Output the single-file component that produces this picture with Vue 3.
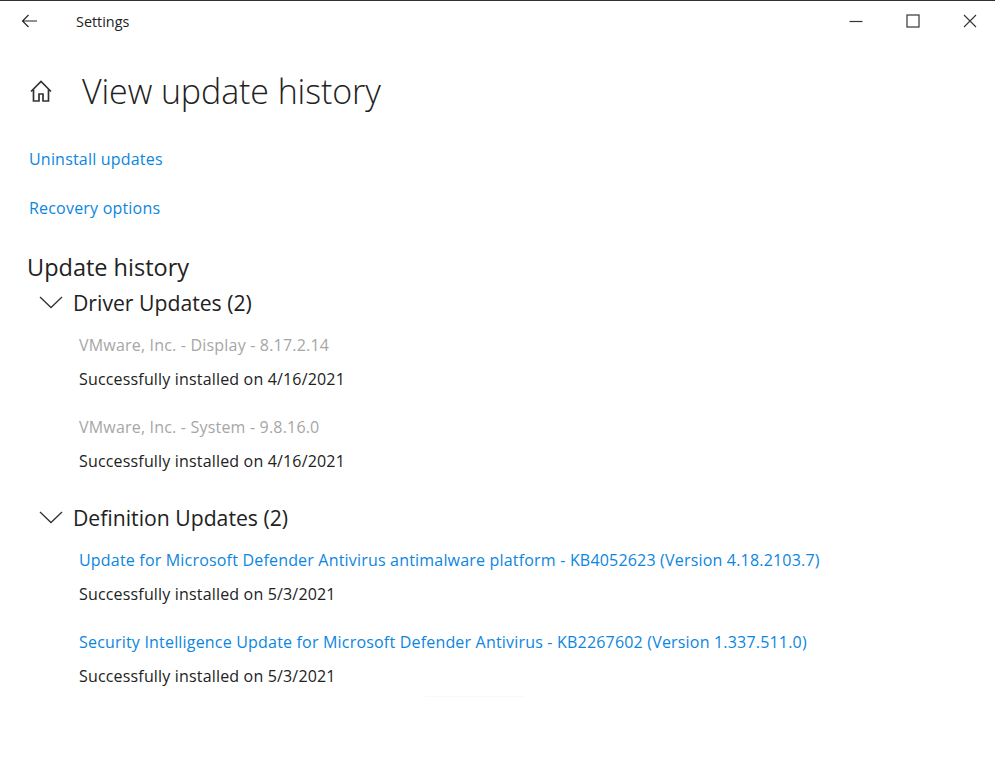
<template>
  <div class="window">
    <header class="titlebar">
      <div class="back">
        <svg width="16" height="14" viewBox="0 0 16 14"><path d="M7.5 1 1.5 7l6 6M1.5 7H16" fill="none" stroke="#222" stroke-width="1.1" /></svg>
      </div>
      <span class="app-name">Settings</span>
      <div class="controls">
        <svg width="14" height="14" viewBox="0 0 14 14"><path d="M0.5 7.5h13" stroke="#333" stroke-width="1.2" /></svg>
        <svg width="14" height="14" viewBox="0 0 14 14"><rect x="1" y="1" width="12" height="12" fill="none" stroke="#444" stroke-width="1.3" /></svg>
        <svg width="14" height="14" viewBox="0 0 14 14"><path d="M1 1l12 12M13 1 1 13" stroke="#333" stroke-width="1.1" /></svg>
      </div>
    </header>

    <main class="content">
      <div class="page-head">
        <svg class="home" width="24" height="24" viewBox="0 0 24 24">
          <path d="M2 12.5 12 2.500l10 10M4.500 10.500V22H10v-7h4v7h5.500V10.500" fill="none" stroke="#333" stroke-width="1.700" />
        </svg>
        <h1>View update history</h1>
      </div>

      <nav class="links">
        <a>Uninstall updates</a>
        <a>Recovery options</a>
      </nav>

      <h2>Update history</h2>

      <section v-for="group in groups" :key="group.title" class="group">
        <div class="group-head">
          <svg width="26" height="14" viewBox="0 0 26 14"><path d="M2 2 13 12.500 24 2" fill="none" stroke="#333" stroke-width="1.300" /></svg>
          <h3>{{ group.title }}</h3>
        </div>
        <div v-for="item in group.items" :key="item" class="entry">
          <div class="entry-name" :class="group.kind">{{ item }}</div>
          <div class="entry-status">{{ group.status }}</div>
        </div>
      </section>
      <div class="fade-line"></div>
    </main>
  </div>
</template>

<script setup>
const groups = [
  {
    title: "Driver Updates (2)",
    kind: "muted",
    status: "Successfully installed on 4/16/2021",
    items: ["VMware, Inc. - Display - 8.17.2.14", "VMware, Inc. - System - 9.8.16.0"],
  },
  {
    title: "Definition Updates (2)",
    kind: "link",
    status: "Successfully installed on 5/3/2021",
    items: [
      "Update for Microsoft Defender Antivirus antimalware platform - KB4052623 (Version 4.18.2103.7)",
      "Security Intelligence Update for Microsoft Defender Antivirus - KB2267602 (Version 1.337.511.0)",
    ],
  },
];
</script>

<style>
html,
body {
  margin: 0;
  background: #fff;
}
</style>

<style scoped>
.window {
  width: 995px;
  height: 784px;
  box-sizing: border-box;
  border-top: 1px solid #2b3237;
  background: #fff;
  color: #222;
  font-family: "Open Sans", "Noto Sans", sans-serif;
  overflow: hidden;
}

.titlebar {
  display: flex;
  align-items: center;
  height: 41px;
  padding: 0 18px 0 21px;
}

.back {
  display: flex;
  width: 55px;
  margin-bottom: 2px;
}

.app-name {
  font-size: 14.400px;
}

.controls {
  display: flex;
  gap: 43px;
  margin-left: auto;
  margin-bottom: 2px;
}

.content {
  padding: 0 28px;
}

.page-head {
  display: flex;
  align-items: center;
  gap: 29px;
  margin: 27px 0 0 1px;
}

.home {
  width: 24px;
  height: 24px;
}

h1 {
  margin: 0;
  font-size: 34px;
  font-weight: 300;
  line-height: 44px;
  letter-spacing: -0.100px;
}

.links {
  display: flex;
  flex-direction: column;
  gap: 27px;
  margin: 35px 0 0 1px;
}

.links a {
  color: #0c86e0;
  font-size: 16px;
  line-height: 22px;
  letter-spacing: 0.200px;
}

h2 {
  margin: 33px 0 0 -1px;
  font-size: 23.500px;
  font-weight: 400;
  line-height: 30px;
}

.group {
  margin-bottom: 30px;
}

.group-head {
  display: flex;
  align-items: center;
  gap: 9px;
  margin: 5px 0 0 10px;
  height: 30px;
}

h3 {
  margin: 0;
  font-size: 21.200px;
  font-weight: 400;
}

.entry {
  margin: 17px 0 0 51px;
}

.entry + .entry {
  margin-top: 26px;
}

.entry-name {
  font-size: 16px;
  line-height: 22px;
  letter-spacing: 0.190px;
}

.entry-name.muted {
  color: #a6a6a6;
}

.entry-name.link {
  color: #0c86e0;
}

.entry-status {
  margin-top: 12px;
  font-size: 16px;
  line-height: 22px;
  letter-spacing: 0.170px;
}

.fade-line {
  width: 100px;
  height: 1px;
  margin: -21px 0 0 397px;
  background: #f2fbfd;
}
</style>
